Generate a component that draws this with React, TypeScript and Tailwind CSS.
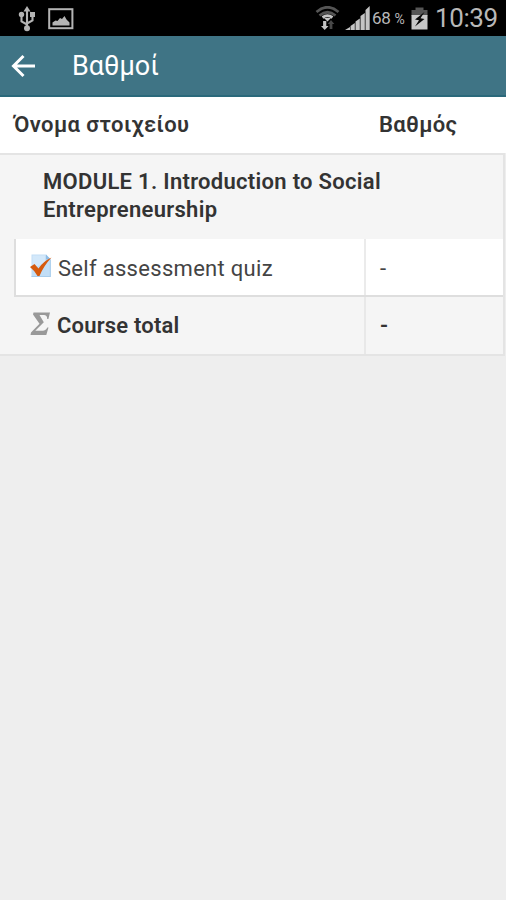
import React from 'react';

// Status bar icons
const UsbIcon = () => (
    <svg width="18" height="26" viewBox="0 0 18 26" fill="none" stroke="#b4b4b4" strokeWidth="2.1">
        <path d="M9 4v18M9 18.500L3.500 15.500V10M9 17.500l5.500-3V9" />
        <path d="M9 0l3.500 5.500h-7z" fill="#b4b4b4" stroke="none" />
        <circle cx="9" cy="22.200" r="3" fill="#b4b4b4" stroke="none" />
        <circle cx="3.500" cy="8.500" r="2.700" fill="#b4b4b4" stroke="none" />
        <path d="M12 6h5v5h-5z" fill="#b4b4b4" stroke="none" />
    </svg>
);

const PictureIcon = () => (
    <svg width="26" height="22" viewBox="0 0 26 22">
        <rect x="1.200" y="1.200" width="23.200" height="19" fill="none" stroke="#b4b4b4" strokeWidth="2" />
        <path d="M4.500 17.500v-3l3-2 2 .5 2.500-3 2 1 2.500-3 2 3.500 1.500 1.500 1.500 1.500v3z" fill="#b4b4b4" />
    </svg>
);

const WifiIcon = () => (
    <svg width="26" height="26" viewBox="0 0 26 26" fill="none">
        <path d="M1.500 6Q12.500-3.500 23.500 6M4.500 9.500Q12.500 3 20.500 9.500" stroke="#555" strokeWidth="2.700" />
        <path d="M7.500 11.500q5-3.500 10 0" stroke="#c4c4c4" strokeWidth="2.800" />
        <path d="M9 12h7l-3.500 3.500z" fill="#c4c4c4" />
        <path d="M9.700 15v7" stroke="#c4c4c4" strokeWidth="3.200" />
        <path d="M6 20h7.500L9.700 24z" fill="#c4c4c4" />
        <path d="M16 17v6" stroke="#484848" strokeWidth="2.800" />
        <path d="M12.700 18l3.300-4 3.300 4z" fill="#484848" />
    </svg>
);

const SignalIcon = () => (
    <svg width="26" height="26" viewBox="0 0 26 26" fill="#c4c4c4">
        <path d="M0 24l5-3v3zM5.500 20l4.300-3v7H5.500zM10.500 15.500l4.300-3V24h-4.300zM15.500 10l4.300-3v17h-4.300zM20.500 4L24.700 0v24h-4.200z" />
    </svg>
);

const BatteryIcon = () => (
    <svg width="17" height="23" viewBox="0 0 17 23">
        <path d="M4.500 0.500h8v2.500h-8z" fill="#555" />
        <path d="M0.500 3h16v6h-16z" fill="#555" />
        <path d="M0.500 8h16v14.500h-16z" fill="#c8c8c8" />
        <path d="M13.500 5L4 12.500l4 .8L4 19.500l9.500-7.500-4-.8z" fill="#080808" />
    </svg>
);

const BackIcon = () => (
    <svg width="24" height="24" viewBox="0 0 24 24" fill="none" stroke="#fff" strokeWidth="3">
        <path d="M24 12H2.500M12.500 2L2.500 12l10 10" />
    </svg>
);

// Grade item icons
const QuizIcon = () => (
    <svg width="22" height="25" viewBox="0 0 22 25">
        <path d="M1.500 1.500H16l4.800 5V24H1.500z" fill="#c2def6" />
        <path d="M2.500 2.500H15v7L2.500 16z" fill="#d3e8fa" />
        <path d="M16 1.500v5h4.800z" fill="#8fbce5" />
        <path d="M20.800 7v17H1.500v-1h18.300V7z" fill="#a9cdec" />
        <path d="M0 14l4.500-3 4 4.500Q13 8.500 21.500 4.500q-8 8.500-12 18.500H7.500Q4.500 17.500 0 14z" fill="#d65a0d" />
    </svg>
);

const SumIcon = () => (
    <svg width="21" height="24" viewBox="0 0 21 24" fill="#999">
        <path d="M3.500.5H20l-1.600 6.500h-1.200c0-3-1-4-4-4H9.500l4.300 7.300-8.500 8.500h5.500c3.500 0 5-.5 6.500-3.300h1.200L16.300 23H0.500l.5-2.500 8.500-8.700L3 2.500z" />
    </svg>
);

const StatusBar = () => (
    <div className="flex h-9 items-center bg-black text-[#b8b8b8]">
        <div className="ml-[18px] mt-px"><UsbIcon /></div>
        <div className="ml-[12px] mt-px"><PictureIcon /></div>
        <div className="flex-1" />
        <div className="mt-px"><WifiIcon /></div>
        <div className="ml-[4px] mt-px"><SignalIcon /></div>
        <span className="ml-[1px] mt-[2px] w-[38px] whitespace-nowrap text-[17px] tracking-[-0.3px]">
            68 <span className="text-[14px]">%</span>
        </span>
        <div className="ml-[1px]"><BatteryIcon /></div>
        <span className="ml-[7px] mt-px w-[71px] whitespace-nowrap text-[26px] tracking-[-0.4px]">10:39</span>
    </div>
);

const App: React.FC = () => {
    return (
        <div className="min-h-[900px] w-full bg-[#eee] font-['Roboto','Noto_Sans',sans-serif] text-[#333]">
            <StatusBar />

            {/* Title bar */}
            <header className="flex h-[61px] items-center border-b-2 border-[#2a697b] bg-[#3f7485] text-white">
                <div className="ml-[11px]"><BackIcon /></div>
                <h1 className="ml-[37px] mt-[2px] text-[27px] font-normal">Βαθμοί</h1>
            </header>

            {/* Grades */}
            <div className="flex h-[56px] items-center bg-white pb-px text-[22px] font-semibold">
                <div className="w-[364px] pl-[14px] tracking-[0.4px]">Όνομα στοιχείου</div>
                <div className="pl-[15px] tracking-[0.3px]">Βαθμός</div>
            </div>

            <div className="mr-[1px] border-y-2 border-r-2 border-[#e4e4e4] bg-[#f5f5f5] text-[22px]">
                <div className="h-[84px] pl-[43px] pt-[13px] font-semibold leading-[28px] tracking-[0.3px]">
                    MODULE 1. Introduction to Social<br />Entrepreneurship
                </div>
                <div className="ml-[14px] flex h-[58px] border-b-2 border-l-2 border-[#dedede] bg-white">
                    <div className="flex w-[350px] items-center border-r-2 border-[#ebebeb] pl-[14px]">
                        <div className="-mt-[3px]"><QuizIcon /></div>
                        <span className="ml-[6px] mt-[2px] tracking-[0.3px] text-[#444]">Self assessment quiz</span>
                    </div>
                    <div className="flex items-center pl-[14px] pt-[2px] text-[#444]">-</div>
                </div>
                <div className="flex h-[57px] font-semibold">
                    <div className="flex w-[366px] items-center border-r-2 border-[#e8e8e8] pl-[30px]">
                        <div className="-mt-[4px]"><SumIcon /></div>
                        <span className="ml-[6px] tracking-[0.2px]">Course total</span>
                    </div>
                    <div className="flex items-center pl-[14px]">-</div>
                </div>
            </div>
        </div>
    );
};

export default App;
